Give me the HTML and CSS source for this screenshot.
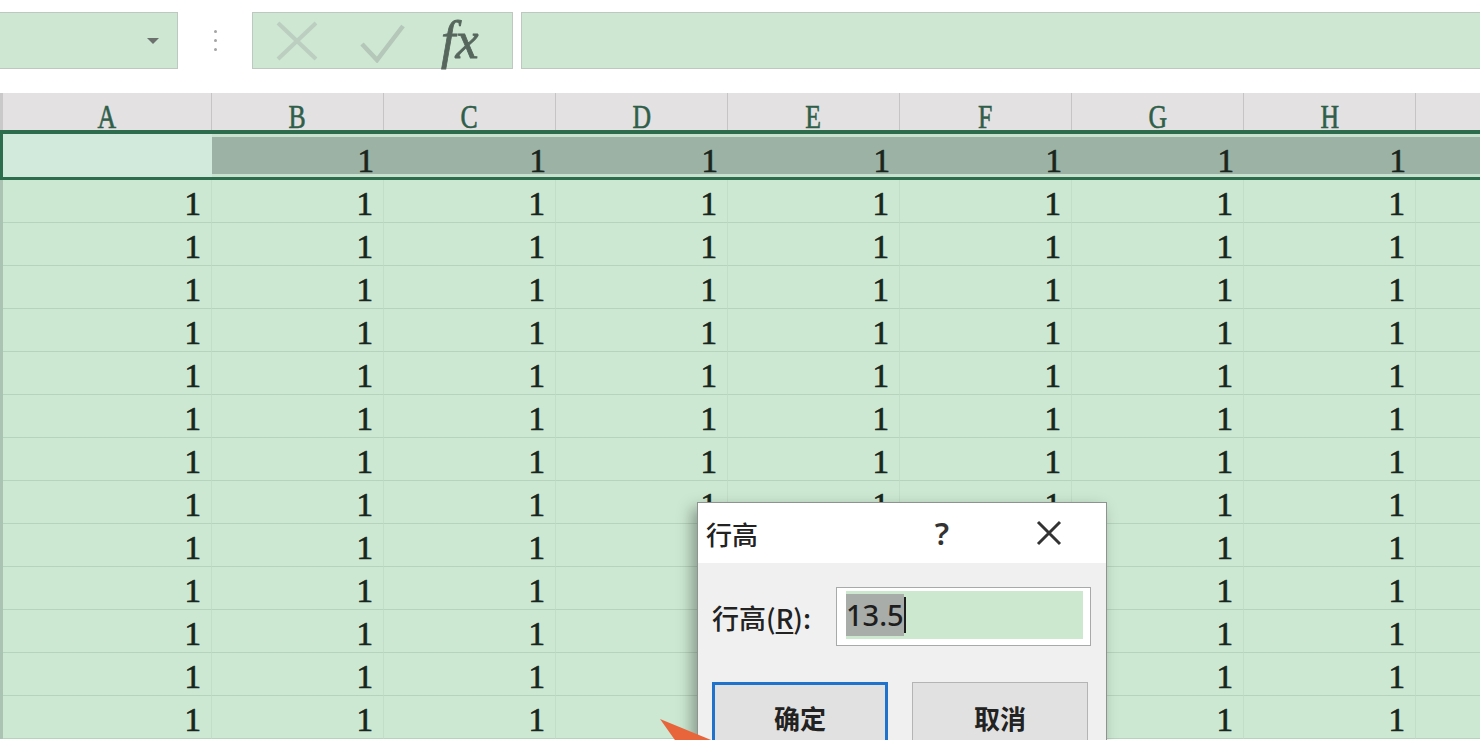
FILE: index.html
```html
<!DOCTYPE html>
<html lang="zh-CN">
<head>
<meta charset="utf-8">
<title>行高</title>
<link rel="stylesheet" href="styles.css">
</head>
<body>
<div class="toolbar">
  <div class="namebox"><span class="caret-down"></span></div>
  <div class="grip"><span></span><span></span><span></span></div>
  <div class="fbtns">
    <svg class="ic-x" width="44" height="42" viewBox="0 0 44 42"><path d="M3 3 L41 39 M41 3 L3 39" stroke="#bccec0" stroke-width="4" fill="none"/></svg>
    <svg class="ic-ok" width="46" height="40" viewBox="0 0 46 40"><path d="M3 21 L18 37 L44 3" stroke="#b4c7b8" stroke-width="4.5" fill="none"/></svg>
    <span class="fx">fx</span>
  </div>
  <div class="finput"></div>
</div>

<div class="sheet">
  <div class="hdr">
    <div><span>A</span></div><div><span>B</span></div><div><span>C</span></div><div><span>D</span></div><div><span>E</span></div><div><span>F</span></div><div><span>G</span></div><div><span>H</span></div><div></div>
  </div>
  <div class="row sel">
    <div class="c first"></div><div class="c">1</div><div class="c">1</div><div class="c">1</div><div class="c">1</div><div class="c">1</div><div class="c">1</div><div class="c">1</div><div class="c"></div>
  </div>
  <div class="row"><div class="c">1</div><div class="c">1</div><div class="c">1</div><div class="c">1</div><div class="c">1</div><div class="c">1</div><div class="c">1</div><div class="c">1</div><div class="c"></div></div>
  <div class="row"><div class="c">1</div><div class="c">1</div><div class="c">1</div><div class="c">1</div><div class="c">1</div><div class="c">1</div><div class="c">1</div><div class="c">1</div><div class="c"></div></div>
  <div class="row"><div class="c">1</div><div class="c">1</div><div class="c">1</div><div class="c">1</div><div class="c">1</div><div class="c">1</div><div class="c">1</div><div class="c">1</div><div class="c"></div></div>
  <div class="row"><div class="c">1</div><div class="c">1</div><div class="c">1</div><div class="c">1</div><div class="c">1</div><div class="c">1</div><div class="c">1</div><div class="c">1</div><div class="c"></div></div>
  <div class="row"><div class="c">1</div><div class="c">1</div><div class="c">1</div><div class="c">1</div><div class="c">1</div><div class="c">1</div><div class="c">1</div><div class="c">1</div><div class="c"></div></div>
  <div class="row"><div class="c">1</div><div class="c">1</div><div class="c">1</div><div class="c">1</div><div class="c">1</div><div class="c">1</div><div class="c">1</div><div class="c">1</div><div class="c"></div></div>
  <div class="row"><div class="c">1</div><div class="c">1</div><div class="c">1</div><div class="c">1</div><div class="c">1</div><div class="c">1</div><div class="c">1</div><div class="c">1</div><div class="c"></div></div>
  <div class="row"><div class="c">1</div><div class="c">1</div><div class="c">1</div><div class="c">1</div><div class="c">1</div><div class="c">1</div><div class="c">1</div><div class="c">1</div><div class="c"></div></div>
  <div class="row"><div class="c">1</div><div class="c">1</div><div class="c">1</div><div class="c"></div><div class="c"></div><div class="c"></div><div class="c">1</div><div class="c">1</div><div class="c"></div></div>
  <div class="row"><div class="c">1</div><div class="c">1</div><div class="c">1</div><div class="c"></div><div class="c"></div><div class="c"></div><div class="c">1</div><div class="c">1</div><div class="c"></div></div>
  <div class="row"><div class="c">1</div><div class="c">1</div><div class="c">1</div><div class="c"></div><div class="c"></div><div class="c"></div><div class="c">1</div><div class="c">1</div><div class="c"></div></div>
  <div class="row"><div class="c">1</div><div class="c">1</div><div class="c">1</div><div class="c"></div><div class="c"></div><div class="c"></div><div class="c">1</div><div class="c">1</div><div class="c"></div></div>
  <div class="row"><div class="c">1</div><div class="c">1</div><div class="c">1</div><div class="c"></div><div class="c"></div><div class="c"></div><div class="c">1</div><div class="c">1</div><div class="c"></div></div>
</div>

<div class="dialog">
  <div class="dlg-title">
    <span class="dlg-name">行高</span>
    <span class="dlg-help">?</span>
    <span class="dlg-close"><svg width="26" height="26" viewBox="0 0 26 26"><path d="M2 2 L24 24 M24 2 L2 24" stroke="#333" stroke-width="3" fill="none"/></svg></span>
  </div>
  <div class="dlg-body">
    <div class="dlg-row">
      <span class="dlg-label">行高(<u>R</u>):</span>
      <div class="field"><div class="field-in"><span class="sel-text">13.5</span><span class="text-caret"></span></div></div>
    </div>
    <div class="dlg-btns">
      <div class="btn primary">确定</div>
      <div class="btn">取消</div>
    </div>
  </div>
</div>

<svg class="arrow" width="80" height="40" viewBox="0 0 80 40"><polygon points="8,9 64,32 62,40 30,40" fill="#e8653c"/></svg>
</body>
</html>
```

FILE: styles.css
```css
* { box-sizing: border-box; }
html, body { margin: 0; padding: 0; }
body {
  width: 1480px;
  height: 740px;
  overflow: hidden;
  background: #ffffff;
  position: relative;
  font-family: "Liberation Serif", serif;
}

/* formula bar */
.toolbar {
  display: flex;
  height: 69px;
  padding-top: 12px;
}
.namebox {
  width: 178px;
  background: #cde7d3;
  border: 1px solid #bfc7c1;
  border-left: none;
  display: flex;
  align-items: center;
  justify-content: flex-end;
  padding-right: 18px;
}
.caret-down {
  width: 0;
  height: 0;
  border-left: 6px solid transparent;
  border-right: 6px solid transparent;
  border-top: 6px solid #6d716e;
}
.grip {
  width: 74px;
  display: flex;
  flex-direction: column;
  align-items: center;
  justify-content: center;
  gap: 6px;
}
.grip span {
  width: 3px;
  height: 3px;
  border-radius: 50%;
  background: #a2a6a3;
}
.fbtns {
  width: 261px;
  background: #cde7d3;
  border: 1px solid #bfc7c1;
  display: flex;
  align-items: center;
  padding-left: 22px;
}
.ic-ok { margin-left: 40px; margin-top: 4px; }
.fx {
  margin-left: 36px;
  font-family: "Liberation Serif", serif;
  font-style: italic;
  font-size: 52px;
  line-height: 52px;
  color: #56665c;
  -webkit-text-stroke: 0.8px #56665c;
}
.finput {
  flex: 1;
  margin-left: 8px;
  margin-right: -4px;
  background: #cde7d3;
  border: 1px solid #bfc7c1;
}

/* sheet */
.sheet {
  margin-top: 24px;
}
.hdr, .row {
  display: grid;
  grid-template-columns: 209px repeat(8, 172px);
}
.hdr {
  height: 37px;
  background: #e3e1e1;
  border-left: 3px solid #c9c9c9;
}
.hdr div {
  border-right: 1px solid #c6c5c5;
  display: flex;
  align-items: flex-end;
  justify-content: center;
  font-size: 33px;
  line-height: 25px;
  color: #2f5e4a;
  -webkit-text-stroke: 0.6px #2f5e4a;
}
.hdr span {
  display: inline-block;
  transform: scaleX(0.78);
}
.row {
  height: 43px;
  border-left: 3px solid #aac3b2;
}
.c {
  background: #cce8d2;
  border-right: 1px solid #c2ddc8;
  border-bottom: 1px solid #b6d3be;
  display: flex;
  align-items: flex-end;
  justify-content: flex-end;
  padding-right: 10px;
  font-size: 33px;
  line-height: 36px;
  color: #18261e;
  -webkit-text-stroke: 0.7px #18261e;
}
.row.sel {
  height: 50px;
  border-top: 4px solid #2e6c4e;
  border-bottom: 3px solid #2e6c4e;
  border-left: 3px solid #2e6c4e;
}
.row.sel .c {
  height: 43px;
  line-height: 32px;
  border-bottom: none;
  border-right: none;
  background: #9cb2a4;
  box-shadow: inset 0 3px 0 #c9e2cf, inset 0 -3px 0 #c9e2cf;
}
.row.sel .c.first {
  background: #d2eadb;
  box-shadow: none;
}

/* dialog */
.dialog {
  position: absolute;
  left: 697px;
  top: 502px;
  width: 410px;
  height: 280px;
  background: #f0f0f0;
  border: 1px solid #8e938f;
  box-shadow: -5px 6px 14px rgba(0, 0, 0, 0.35);
  font-family: "Noto Sans CJK SC", "Noto Sans", sans-serif;
  font-weight: 500;
  color: #222;
}
.dlg-title {
  height: 60px;
  background: #ffffff;
  display: flex;
  align-items: center;
  padding-left: 8px;
}
.dlg-name {
  flex: 1;
  font-size: 26px;
}
.dlg-help {
  width: 100px;
  text-align: center;
  font-family: "Noto Sans", sans-serif;
  font-size: 31px;
  font-weight: 600;
  color: #333;
}
.dlg-close {
  width: 114px;
  display: flex;
  justify-content: center;
  align-items: center;
}
.dlg-body {
  padding: 24px 15px 0 14px;
}
.dlg-row {
  display: flex;
  align-items: center;
  justify-content: space-between;
}
.dlg-label {
  font-size: 27px;
  margin-top: 2px;
}
.dlg-label u { text-underline-offset: 3px; }
.field {
  width: 255px;
  height: 59px;
  background: #ffffff;
  border: 1px solid #a8aaa9;
  padding: 3px 7px 6px 9px;
}
.field-in {
  height: 100%;
  background: #cce8cf;
  display: flex;
  align-items: center;
}
.sel-text {
  font-family: "Noto Sans", sans-serif;
  font-size: 29px;
  font-weight: 500;
  line-height: 42px;
  background: #a9adaa;
  color: #1e1e1e;
}
.text-caret {
  width: 2px;
  height: 36px;
  background: #1e1e1e;
}
.dlg-btns {
  display: flex;
  gap: 24px;
  margin-top: 36px;
}
.btn {
  width: 176px;
  height: 70px;
  background: #e1e1e1;
  border: 1px solid #b4b4b4;
  display: flex;
  align-items: center;
  justify-content: center;
  font-size: 26px;
  font-weight: 600;
  color: #222;
}
.btn.primary {
  border: 3px solid #1f73cc;
}

.arrow {
  position: absolute;
  left: 652px;
  top: 710px;
}
```
